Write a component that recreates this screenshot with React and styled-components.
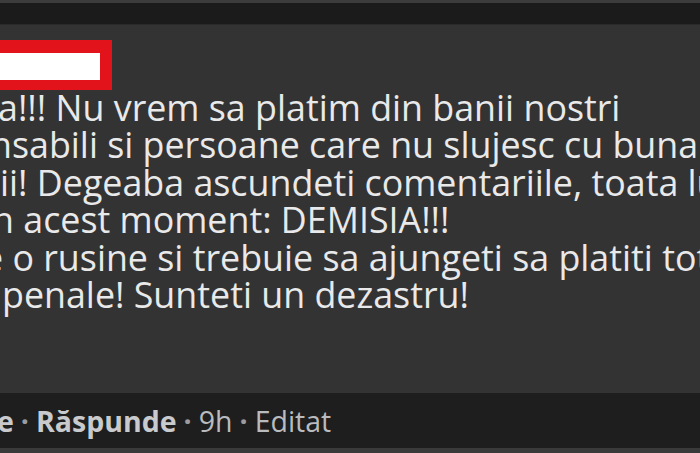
import React from "react";
import styled, { createGlobalStyle } from "styled-components";

const Global = createGlobalStyle`
  html, body { margin: 0; padding: 0; background: #1c1c1c; }
  body { width: 700px; height: 453px; overflow: hidden; }
  #root { width: 700px; height: 453px; }
`;

const Page = styled.div`
  width: 700px;
  height: 453px;
  display: flex;
  flex-direction: column;
  overflow: hidden;
  background: #1c1c1c;
  font-family: "Open Sans", "Noto Sans", sans-serif;
`;

const TopEdge = styled.div`
  height: 3px;
  background: #3c3c3c;
`;

const TopBand = styled.div`
  height: 21px;
  background: #1b1b1b;
  border-bottom: 1px solid #2a2a2a;
`;

const Bubble = styled.div`
  height: 368px;
  background: #333333;
  display: flex;
  flex-direction: column;
  overflow: hidden;
`;

const NameRedaction = styled.div`
  flex: none;
  width: 100px;
  height: 27px;
  margin-top: 15px;
  background: #ffffff;
  border-style: solid;
  border-color: #e3131b;
  border-width: 13px 12px 10px 0;
`;

const Body = styled.div`
  margin-top: -1px;
  color: #e9e9ea;
  font-size: 35.8px;
  line-height: 37.4px;
  white-space: nowrap;
`;

const Line = styled.div`
  margin-left: ${(p) => p.$cut || 0}px;
`;

const Footer = styled.div`
  height: 55px;
  background: #1e1e1e;
  display: flex;
  align-items: center;
  gap: 7px;
  color: #b9bbbe;
  font-size: 28.5px;
  white-space: nowrap;
`;

const Action = styled.span`
  font-weight: ${(p) => (p.$bold ? 700 : 400)};
  color: ${(p) => (p.$bold ? "#c8cacd" : "#b9bbbe")};
  margin-left: ${(p) => p.$cut || 0}px;
`;

const Dot = styled.span`
  font-weight: 700;
  color: #9a9ca0;
`;

const BottomEdge = styled.div`
  flex: 1;
  background: #3a3a3a;
`;

export default function App() {
  return (
    <Page>
      <Global />
      <TopEdge />
      <TopBand />
      <Bubble>
        <NameRedaction />
        <Body>
          <Line $cut={-2}>a!!! Nu vrem sa platim din banii nostri</Line>
          <Line $cut={-10}>nsabili si persoane care nu slujesc cu buna credinta</Line>
          <Line $cut={0}>ii! Degeaba ascundeti comentariile, toata lumea</Line>
          <Line $cut={-8}>n acest moment: DEMISIA!!!</Line>
          <Line $cut={-17}>e o rusine si trebuie sa ajungeti sa platiti tot</Line>
          <Line $cut={2}>penale! Sunteti un dezastru!</Line>
        </Body>
      </Bubble>
      <Footer>
        <Action $bold $cut={-3}>e</Action>
        <Dot>·</Dot>
        <Action $bold>Răspunde</Action>
        <Dot>·</Dot>
        <Action>9h</Action>
        <Dot>·</Dot>
        <Action>Editat</Action>
      </Footer>
      <BottomEdge />
    </Page>
  );
}
